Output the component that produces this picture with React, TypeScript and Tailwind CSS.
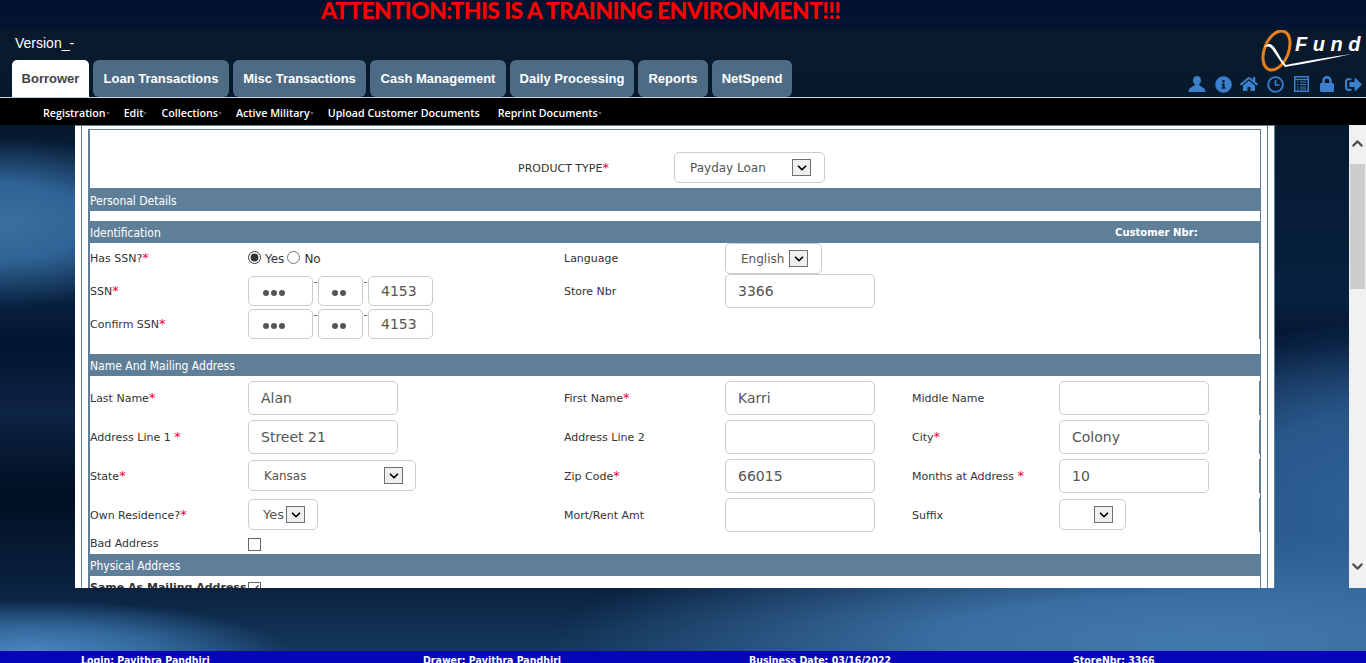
import { ReactNode } from "react";
import { FaHome, FaInfoCircle, FaLock, FaSignOutAlt } from "react-icons/fa";
import { Check, ChevronDown, ChevronUp } from "lucide-react";

const tabs = [
  { name: "Loan Transactions", width: "w-[136px]" },
  { name: "Misc Transactions", width: "w-[133px]" },
  { name: "Cash Management", width: "w-[136px]" },
  { name: "Daily Processing", width: "w-[124px]" },
  { name: "Reports", width: "w-[70px]" },
  { name: "NetSpend", width: "w-[80px]" },
];

const subMenu = [
  { name: "Registration", caret: true },
  { name: "Edit", caret: true },
  { name: "Collections", caret: true },
  { name: "Active Military", caret: true },
  { name: "Upload Customer Documents", caret: false },
  { name: "Reprint Documents", caret: true },
];

const formRow = "grid grid-cols-[158px_316px_161px_187px_147px_1fr] items-center border-r border-[#5f7f99]";

const Req = () => <span className="text-[13px] leading-none text-[#f0003c]">*</span>;

const Label = ({ children, low = false }: { children: ReactNode; low?: boolean }) => (
  <div className={`text-[11px] text-[#333] whitespace-nowrap ${low ? "pt-[3px]" : "pt-[1px]"}`}>{children}</div>
);

const Input = ({ value, className = "w-[150px] h-[34px]" }: { value?: string; className?: string }) => (
  <div className={`flex items-center pl-[12px] rounded-[5px] border border-[#ccc] bg-white text-[14px] text-[#555] ${className}`}>
    {value}
  </div>
);

const Dots = ({ count, pad }: { count: number; pad: string }) => (
  <div className={`flex items-center gap-[2px] h-[30px] rounded-[5px] border border-[#ccc] bg-white ${pad}`}>
    {Array.from({ length: count }).map((_, i) => (
      <span key={i} className="w-[6px] h-[6px] mt-[3px] rounded-full bg-[#555]" />
    ))}
  </div>
);

const SelectBox = ({ value, className, textClass = "pl-[15px]" }: { value?: string; className: string; textClass?: string }) => (
  <div className={`flex items-center justify-between rounded-[5px] border border-[#ccc] bg-white text-[12px] text-[#555] h-[31px] self-start mt-[1px] ${className}`}>
    <span className={textClass}>{value}</span>
    <span className="flex items-center justify-center w-[19px] h-[17px] bg-[#efefef] border border-[#707070] text-black">
      <ChevronDown size={14} strokeWidth={3} />
    </span>
  </div>
);

const Bar = ({ children, height = "h-[22px]" }: { children: ReactNode; height?: string }) => (
  <div className={`flex items-center ml-[-2px] mr-[-1px] pl-[2px] pt-[2px] bg-[#5f7f99] text-white text-[12px] font-['DejaVu_Sans_Condensed','DejaVu_Sans',sans-serif] ${height}`}>
    {children}
  </div>
);

const Ssn = ({ rowClass }: { rowClass: string }) => (
  <div className={`flex items-start ${rowClass}`}>
    <Dots count={3} pad="w-[65px] pl-[14px]" />
    <span className="w-[5px] text-[11px] text-[#555] leading-[12px] text-center">-</span>
    <Dots count={2} pad="w-[45px] pl-[13px]" />
    <span className="w-[5px] text-[11px] text-[#555] leading-[12px] text-center">-</span>
    <Input value="4153" className="w-[65px] h-[30px]" />
  </div>
);

const UserIcon = () => (
  <svg width="18" height="16" viewBox="0 0 18 16" fill="currentColor">
    <ellipse cx="9" cy="4.6" rx="4" ry="4.6" />
    <path d="M6.8 8.5 C6.6 10.5 1.5 11 .8 14 L.5 16 H17.5 L17.2 14 C16.5 11 11.4 10.5 11.2 8.5 Z" />
  </svg>
);

const ClockIcon = () => (
  <svg width="17" height="17" viewBox="0 0 17 17" fill="none" stroke="currentColor" strokeWidth="1.8">
    <circle cx="8.5" cy="8.5" r="7.4" />
    <path d="M8.5 4 V9 H12.5" strokeWidth="1.6" />
  </svg>
);

const ListIcon = () => (
  <svg width="15" height="16" viewBox="0 0 15 16" fill="none" stroke="currentColor">
    <rect x=".75" y=".75" width="13.5" height="14.5" strokeWidth="1.5" />
    <path d="M1 3.5 H14" strokeWidth="1.4" />
    <path d="M3 6 H4.5 M6 6 H12 M3 8.5 H4.5 M6 8.5 H12 M3 11 H4.5 M6 11 H12 M3 13 H4.5 M6 13 H12" strokeWidth="1.1" />
  </svg>
);

const Logo = () => (
  <div className="relative w-[100px] h-[42px] mr-[6px]">
    <svg width="100" height="42" viewBox="0 0 100 42" fill="none" className="absolute left-0 top-0">
      <ellipse cx="16.5" cy="20.5" rx="12" ry="20.5" transform="rotate(22 16.5 20.5)" stroke="#e8801a" strokeWidth="3" />
      <path d="M4 18 C7 13 11 13 14 17 C18 22 21 30 26 35 C40 32 70 27 92 24 C70 29 42 34 25 37 C20 32 16 24 12 19 C9 16 7 16 4 18 Z" fill="white" />
    </svg>
    <span className="absolute left-[35px] top-[2px] text-[20px] leading-[24px] font-bold italic text-white tracking-[5.5px] font-['Liberation_Sans',sans-serif] whitespace-nowrap">
      Fund
    </span>
  </div>
);

const headerIcons = [
  <UserIcon key="user" />,
  <FaInfoCircle key="info" size={17} />,
  <FaHome key="home" size={18} />,
  <ClockIcon key="clock" />,
  <ListIcon key="list" />,
  <FaLock key="lock" size={16} />,
  <FaSignOutAlt key="out" size={17} />,
];

export default function App() {
  return (
    <div className="flex flex-col w-full h-[663px] overflow-hidden font-['DejaVu_Sans',sans-serif] bg-[radial-gradient(ellipse_200px_85px_at_0px_222px,#3a6f9f_0%,#2f6496_45%,transparent_100%),radial-gradient(ellipse_650px_110px_at_1200px_640px,#4279ae_0%,#3a6ea2_40%,transparent_100%),radial-gradient(ellipse_260px_55px_at_30px_655px,#5088c2_0%,#32689c_50%,transparent_100%),radial-gradient(ellipse_260px_190px_at_1366px_510px,#2f6296_0%,#28578a_50%,transparent_100%),linear-gradient(180deg,#02122e_0px,#021530_28px,#0a1a2c_32px,#06192f_125px,#08213f_300px,#021430_345px,#0e2444_410px,#010f22_495px,#0a2240_590px,#14375a_650px)]">
      {/* header */}
      <header className="flex justify-between h-[98px] border-b border-[#c4d4e2]">
        <div className="flex flex-col">
          <div className="h-[24px] pl-[321px] text-[23px] leading-[20px] font-black tracking-[-0.6px] text-[#ff0000] whitespace-nowrap font-['Lato',sans-serif]">
            ATTENTION:THIS IS A TRAINING ENVIRONMENT!!!
          </div>
          <div className="flex items-center h-[36px] pl-[15px] pt-[2px] text-[14px] text-white font-['Liberation_Sans',sans-serif]">
            Version_-
          </div>
          <nav className="flex gap-[4px] pl-[12px] h-[37px] text-[13px] font-bold font-['Liberation_Sans',sans-serif]">
            <div className="flex items-center justify-center w-[77px] rounded-t-[5px] bg-white text-[#444]">Borrower</div>
            {tabs.map((tab) => (
              <div key={tab.name} className={`flex items-center justify-center rounded-[6px] bg-[#4d6b85] text-white whitespace-nowrap ${tab.width}`}>
                {tab.name}
              </div>
            ))}
          </nav>
        </div>
        <div className="flex flex-col items-end pt-[30px]">
          <Logo />
          <div className="flex items-center h-[20px] mt-[2px] text-[#3a80cc]">
            {headerIcons.map((icon) => (
              <div key={icon.key} className="flex items-center justify-center w-[26px]">
                {icon}
              </div>
            ))}
          </div>
        </div>
      </header>

      {/* sub menu */}
      <div className="flex items-center gap-[18px] h-[27px] pl-[43px] pt-[3px] bg-black text-white text-[10.7px] font-semibold font-['Open_Sans',sans-serif]">
        {subMenu.map((item) => (
          <span key={item.name} className="relative whitespace-nowrap">
            {item.name}
            {item.caret && <span className="absolute left-full top-[7px] border-x-[2px] border-t-[3px] border-x-transparent border-t-[#555]" />}
          </span>
        ))}
      </div>

      {/* main */}
      <div className="flex justify-between h-[463px]">
        <div className="w-[1200px] ml-[75px] px-[6px] bg-white border-t border-r border-[#5f7f99] overflow-hidden">
          <div className="h-[600px] pt-[3px] px-[6px] border-x border-[#5f7f99]">
            <div className="h-[600px] border-t border-l-2 border-r border-[#5f7f99]">
              <div className="grid grid-cols-[428px_156px_1fr] items-center h-[58px] pt-[22px] pb-[5px]">
                <div className="pl-[428px] pt-[4px] whitespace-nowrap text-[11px] text-[#333] col-span-2">
                  PRODUCT TYPE<Req />
                </div>
                <SelectBox value="Payday Loan" className="w-[151px] pr-[13px] !mt-0" />
              </div>

              <Bar height="h-[23px]">Personal Details</Bar>
              <div className="h-[10px]" />
              <Bar>
                <span className="w-[1025px]">Identification</span>
                <span className="text-[11.2px] font-bold">Customer Nbr:</span>
              </Bar>

              <div className="h-[111px]">
                <div className={`${formRow} h-[31px]`}>
                  <Label>Has SSN?<Req /></Label>
                  <div className="flex items-center text-[12px] pt-[1px] text-[#333]">
                    <input type="radio" readOnly checked className="w-[13px] h-[13px] m-0 -mt-[3px] accent-[#333]" />
                    <span className="ml-[4px] mr-[3px]">Yes</span>
                    <input type="radio" readOnly className="w-[13px] h-[13px] m-0 -mt-[3px]" />
                    <span className="ml-[4px]">No</span>
                  </div>
                  <Label>Language</Label>
                  <SelectBox value="English" className="w-[97px] pr-[13px] !mt-0" />
                </div>
                <div className={`${formRow} h-[35px]`}>
                  <Label>SSN<Req /></Label>
                  <Ssn rowClass="self-start mt-[2px]" />
                  <Label>Store Nbr</Label>
                  <Input value="3366" className="w-[150px] h-[34px] self-start" />
                </div>
                <div className={`${formRow} h-[30px]`}>
                  <Label low>Confirm SSN<Req /></Label>
                  <Ssn rowClass="" />
                </div>
              </div>

              <Bar>Name And Mailing Address</Bar>

              <div className="flex flex-col gap-[5px] pt-[5px]">
                <div className={`${formRow} h-[34px]`}>
                  <Label low>Last Name<Req /></Label>
                  <Input value="Alan" />
                  <Label low>First Name<Req /></Label>
                  <Input value="Karri" />
                  <Label low>Middle Name</Label>
                  <Input />
                </div>
                <div className={`${formRow} h-[34px]`}>
                  <Label low>Address Line 1 <Req /></Label>
                  <Input value="Street 21" />
                  <Label low>Address Line 2</Label>
                  <Input />
                  <Label low>City<Req /></Label>
                  <Input value="Colony" />
                </div>
                <div className={`${formRow} h-[34px]`}>
                  <Label low>State<Req /></Label>
                  <SelectBox value="Kansas" className="w-[168px] pr-[12px]" />
                  <Label low>Zip Code<Req /></Label>
                  <Input value="66015" />
                  <Label low>Months at Address <Req /></Label>
                  <Input value="10" />
                </div>
                <div className={`${formRow} h-[34px]`}>
                  <Label low>Own Residence?<Req /></Label>
                  <SelectBox value="Yes" className="w-[70px] pr-[12px]" textClass="pl-[14px] text-[13px]" />
                  <Label low>Mort/Rent Amt</Label>
                  <Input />
                  <Label low>Suffix</Label>
                  <SelectBox className="w-[67px] pr-[12px]" />
                </div>
                <div className="grid grid-cols-[158px_1fr] items-start h-[17px]">
                  <div className="text-[11px] leading-[13px] text-[#333]">Bad Address</div>
                  <input type="checkbox" readOnly className="appearance-none w-[13px] h-[13px] m-0 mt-[1px] border border-[#666] bg-white" />
                </div>
              </div>

              <Bar>Physical Address</Bar>
              <div className="grid grid-cols-[158px_1fr] items-center h-[20px] pt-[4px]">
                <div className="text-[11px] font-bold text-[#333] whitespace-nowrap">Same As Mailing Address</div>
                <span className="flex items-center justify-center w-[13px] h-[13px] border border-[#666] bg-white text-[#333]">
                  <Check size={11} strokeWidth={2.5} />
                </span>
              </div>
            </div>
          </div>
        </div>

        {/* scrollbar */}
        <div className="relative flex flex-col items-center justify-between w-[17px] pt-[10px] pb-[13px] bg-[#f1f1f1] text-[#505050]">
          <ChevronUp size={17} strokeWidth={3} />
          <div className="absolute left-[1px] top-[39px] w-[15px] h-[125px] bg-[#cdcdcd]" />
          <ChevronDown size={17} strokeWidth={3} />
        </div>
      </div>

      <div className="h-[63px]" />

      {/* footer */}
      <footer className="flex h-[12px] shrink-0 bg-[#0606b8] text-white text-[10.5px] font-bold leading-[19px] font-['DejaVu_Sans_Condensed','DejaVu_Sans',sans-serif] whitespace-nowrap">
        <span className="ml-[81px] w-[342px]">Login: Pavithra Pandhiri</span>
        <span className="w-[326px]">Drawer: Pavithra Pandhiri</span>
        <span className="w-[324px]">Business Date: 03/16/2022</span>
        <span>StoreNbr: 3366</span>
      </footer>
    </div>
  );
}
